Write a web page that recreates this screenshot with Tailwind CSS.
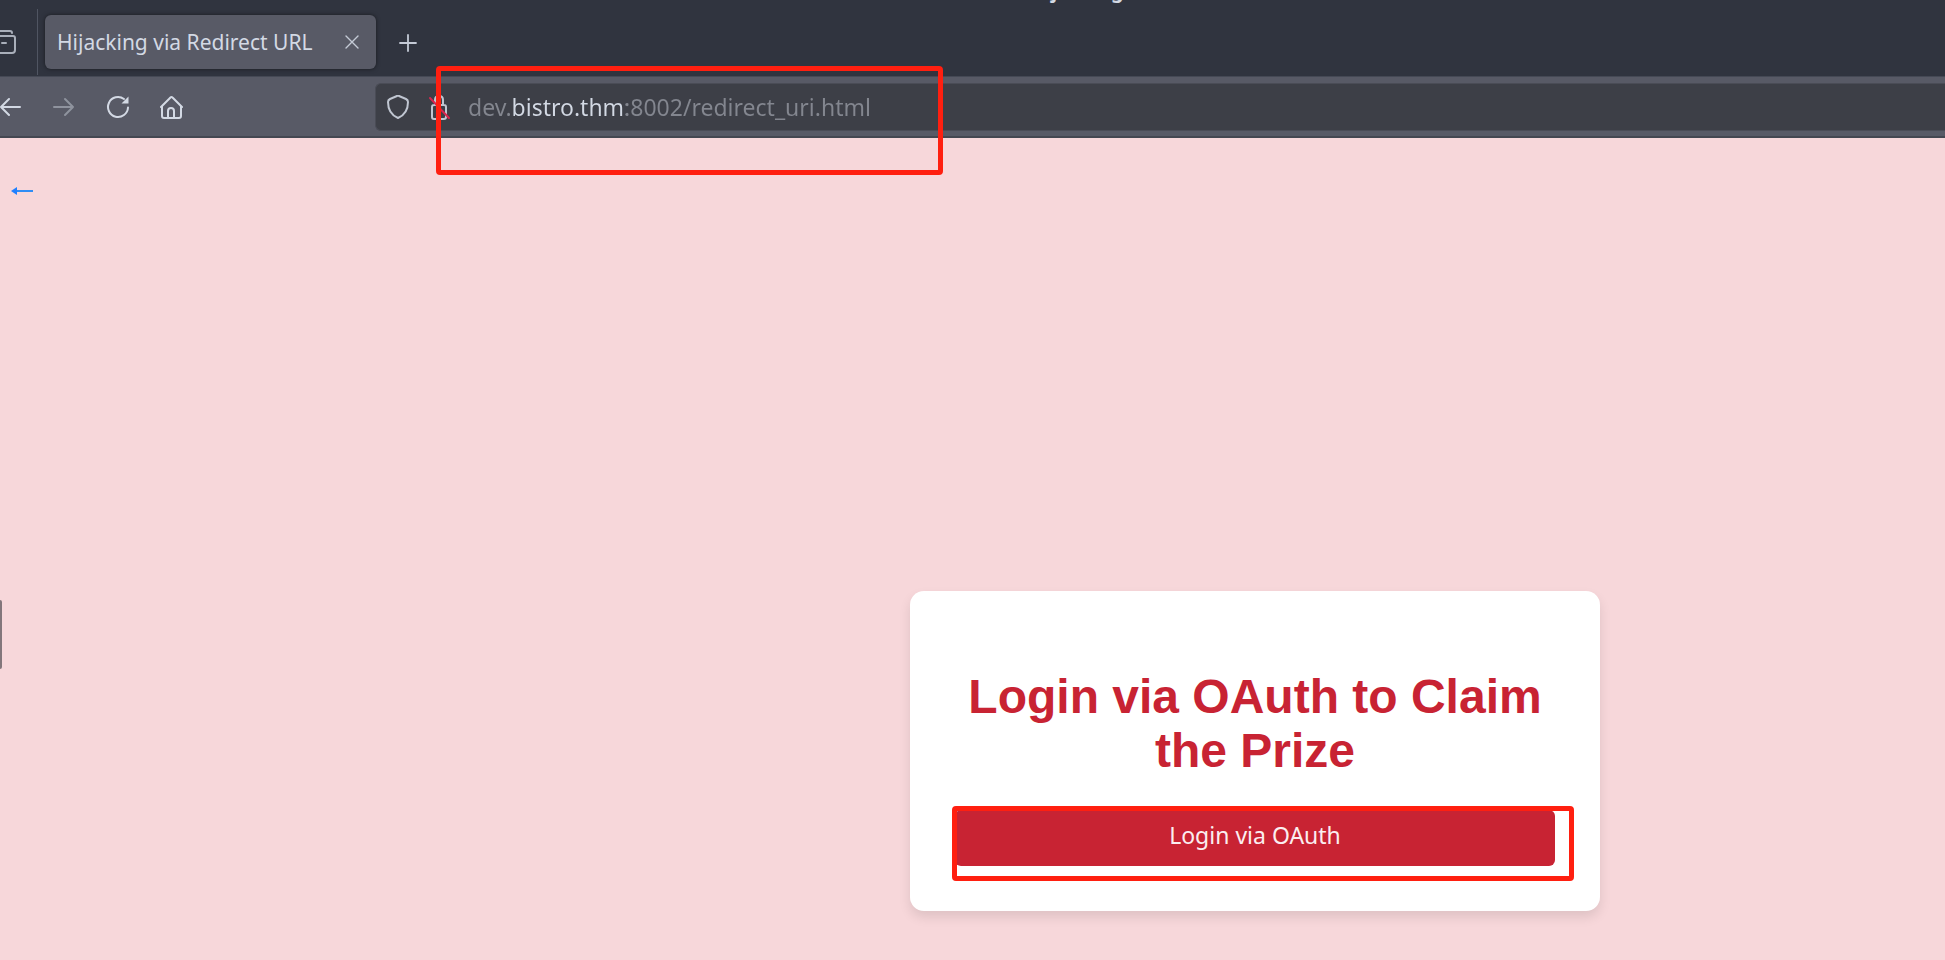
<!DOCTYPE html>
<html lang="en">
<head>
<meta charset="utf-8">
<title>Hijacking via Redirect URL</title>
<script src="https://cdn.jsdelivr.net/npm/@tailwindcss/browser@4"></script>
</head>
<body class="relative flex min-h-screen flex-col overflow-x-hidden bg-[#f7d7da] font-['Noto_Sans',sans-serif] text-[21px] text-[#d3d9e4]">
  <header>
    <div class="relative flex h-[76px] items-center overflow-hidden bg-[#30343f]">
      <p class="absolute -top-6 left-[1030px] text-[20px] leading-[30px] font-bold whitespace-nowrap">Hijacking via Redirect URL — Mozilla Firefox</p>
      <button aria-label="Tabs overview" class="mt-2 h-8 w-[37px]">
        <svg width="20" height="32" viewBox="0 0 20 32" fill="none" stroke="#a9afba" stroke-width="2" stroke-linecap="round" stroke-linejoin="round"><path d="M-4 5H10Q12 5 12 7"/><path d="M-4 10H13Q15 10 15 12V24Q15 27 12 27H-4"/><path d="M2 17H6"/></svg>
      </button>
      <span class="mt-2 h-[66px] w-px bg-[#505562]"></span>
      <div class="mt-2 ml-[7px] flex h-[54px] w-[331px] items-center justify-between rounded-md bg-[#585a66] pr-4 pl-3 shadow-[0_0_4px_rgba(0,0,0,0.5)]">
        <span class="pt-0.5 whitespace-nowrap">Hijacking via Redirect URL</span>
        <button aria-label="Close tab"><svg width="16" height="16" viewBox="0 0 16 16" stroke="#c4cad6" stroke-width="1.4" stroke-linecap="round"><path d="M2 2L14 14M14 2L2 14"/></svg></button>
      </div>
      <button aria-label="New tab" class="mt-2.5 ml-[22px]"><svg width="20" height="20" viewBox="0 0 20 20" stroke="#c4cad6" stroke-width="1.8" stroke-linecap="round"><path d="M10 2V18M2 10H18"/></svg></button>
    </div>
    <div class="flex h-[62px] items-center border-t border-b-2 border-t-[#454955] border-b-[#444751] bg-[#585a66]">
      <nav class="flex w-[375px] shrink-0 items-center gap-[29px]">
        <button aria-label="Back"><svg width="24" height="24" viewBox="0 0 24 24" fill="none" stroke="#d3d9e4" stroke-width="2" stroke-linecap="round" stroke-linejoin="round"><path d="M20 12H1M9 4L1 12L9 20"/></svg></button>
        <button aria-label="Forward"><svg width="24" height="24" viewBox="0 0 24 24" fill="none" stroke="#8f939e" stroke-width="2" stroke-linecap="round" stroke-linejoin="round"><path d="M1 12H20M12 4L20 12L12 20"/></svg></button>
        <button aria-label="Reload"><svg width="24" height="24" viewBox="0 0 24 24" fill="none" stroke="#d3d9e4" stroke-width="2" stroke-linecap="round"><path d="M18 4A10 10 0 1 0 22 12.500"/><path d="M22.500 1.500V8.500H15.500Z" fill="#d3d9e4" stroke="none"/></svg></button>
        <button aria-label="Home"><svg width="24" height="24" viewBox="0 0 24 24" fill="none" stroke="#d3d9e4" stroke-width="2" stroke-linecap="round" stroke-linejoin="round"><path d="M2 12L11 3Q12 1 14 3L23 12M3 11V21Q3 23 5 23H20Q22 23 22 21V11M9 23V16Q9 13 12 13T15 16V23"/></svg></button>
      </nav>
      <div class="flex h-12 flex-1 items-center rounded-l-md border border-r-0 border-[#4a4c56] bg-[#3d3f47] pl-2.5">
        <button aria-label="Tracking protection"><svg width="24" height="24" viewBox="0 0 24 24" fill="none" stroke="#c0c6d1" stroke-width="2" stroke-linejoin="round"><path d="M11 1Q12 0 13 1L20 4Q22 5 22 7C22 14 19 20 12 23C5 20 2 14 2 7Q2 5 4 4Z"/></svg></button>
        <button aria-label="Connection not secure" class="ml-[18px]"><svg width="24" height="26" viewBox="0 0 24 26" fill="none" stroke="#c0c6d1" stroke-width="2" stroke-linecap="round" stroke-linejoin="round"><path d="M7 11V6Q7 2 11 2T15 6V11M4 13Q4 11 6 11H16Q18 11 18 13V23Q18 25 16 25H6Q4 25 4 23Z"/><path d="M2 4L21 24" stroke="#d7264f"/></svg></button>
        <input aria-label="Address" value="dev.bistro.thm:8002/redirect_uri.html" class="ml-4 min-w-0 flex-1 bg-[linear-gradient(90deg,#83868f_0,#83868f_45px,#d3d9e4_45px,#d3d9e4_158px,#83868f_158px)] bg-clip-text pt-0.5 text-[23px] text-transparent outline-none">
      </div>
    </div>
  </header>

  <main class="flex flex-1 flex-col">
    <a href="#" aria-label="Go back" class="mt-10 ml-2.5 w-6"><svg width="24" height="26" viewBox="0 0 24 26" fill="none" stroke="#2f8df5" stroke-width="2"><path d="M5 13H23"/><path d="M1 13L7 9V17Z" fill="#2080ff" stroke="none"/></svg></a>
    <section class="mt-[387px] mb-12 ml-[565px] flex justify-center">
      <div class="w-full max-w-[690px] rounded-[14px] bg-white px-[45px] pt-[79px] pb-[45px] text-center shadow-[0_6px_12px_rgba(0,0,0,0.1)]">
        <h1 class="font-['Liberation_Sans',sans-serif] text-[48px] leading-[54px] font-bold text-[#c82333]">Login via OAuth to Claim the Prize</h1>
        <button class="mt-8 h-14 w-full rounded-md bg-[#c82333] pb-1.5 text-[23px] text-[#fbeef0]">Login via OAuth</button>
      </div>
    </section>
  </main>

  <div class="absolute top-[600px] left-0 h-[69px] w-0.5 rounded-r bg-[#83767b]"></div>
  <div class="pointer-events-none absolute top-[66px] left-[436px] h-[109px] w-[507px] rounded border-[5px] border-[#ff1f10]"></div>
  <div class="pointer-events-none absolute top-[806px] left-[952px] h-[75px] w-[622px] rounded border-[5px] border-[#ff1f10]"></div>
</body>
</html>
